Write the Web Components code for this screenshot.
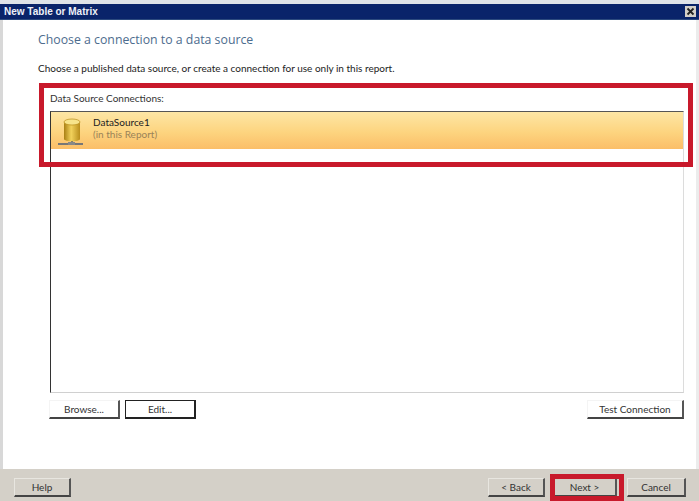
<!DOCTYPE html>
<html><head><meta charset="utf-8"><style>
html,body{margin:0;padding:0;height:100%;background:#fff;overflow:hidden}
body{font:10px/13px Lato,"Open Sans",sans-serif;color:#2b2b2b}
</style></head><body>
<template id="btn"><style>
:host{display:inline-flex;align-items:center;justify-content:center;box-sizing:border-box;height:19px;width:var(--w,71px);border-right:2px solid #555;border-bottom:2px solid #444;border-top:1px solid var(--tl,#f4f4f4);border-left:1px solid var(--tl,#f4f4f4);color:#333;font-size:10px;background:var(--bg,transparent);white-space:nowrap}
:host([strong]){border:1px solid #222;border-right-width:2px;border-bottom-width:2px}
</style><slot></slot></template>

<template id="dlg"><style>
:host{display:grid;grid-template-rows:4px 16px 1fr 32px;height:501px;width:699px;position:relative;box-sizing:border-box}
.strip{background:#dfe3e8}
.bar{background:#0a246a;border-bottom:1px solid #2c4a7e;display:flex;align-items:center;justify-content:space-between;padding:0 3px 0 4px;color:#eef1f8;font:700 10px/15px "Liberation Sans",sans-serif}
.x{width:11px;height:11px;background:#d4d0c8;display:flex;align-items:center;justify-content:center}
.main{border-left:3px solid #d8d8d8;border-right:3px solid #ececec;display:flex;flex-direction:column;min-height:0;padding:0 12px 0 35px}
.foot{background:#d4d0c8;border-left:3px solid #d4d0c8;display:flex;align-items:flex-start;padding:9px 13px 0 11px}
</style><div class="strip"></div>
<div class="bar"><span>New Table or Matrix</span><span class="x"><svg width="9" height="9" viewBox="0 0 9 9"><path d="M1.5 1.5 7.5 7.5M7.5 1.5 1.5 7.5" stroke="#222" stroke-width="1.8"/></svg></span></div>
<div class="main"><slot></slot></div>
<div class="foot"><slot name="footer"></slot></div>
</template>

<template id="conn"><style>
:host{display:flex;flex-direction:column;flex:1;min-height:0}
h1{margin:11px 0 0;font:400 12.3px/17px "Open Sans",sans-serif;color:#4d6c8e;white-space:nowrap}
p{margin:14px 0 0;font-size:10px;line-height:13px;color:#222;white-space:nowrap}
.lbl{margin:17px 0 0 12px;line-height:13px;color:#333}
.list{margin:6px 0 0 12px;height:282px;box-sizing:border-box;border-top:1px solid #555;border-left:1px solid #333;border-right:1px solid #dcdcdc;border-bottom:1px solid #d0d0d0;flex:none}
.row{height:37px;background:linear-gradient(#fde6a5,#fdd47f 55%,#fbbe68);display:flex;align-items:center;gap:9px;padding-left:7px;box-sizing:border-box}
.t{line-height:12px;margin-top:-6px}
.t b{display:block;font-weight:400;color:#222}
.t i{display:block;font-style:normal;color:#9a8358}
.btns{display:flex;gap:5px;margin:7px 0 0 11px}
.sp{flex:1}
</style>
<h1>Choose a connection to a data source</h1>
<p>Choose a published data source, or create a connection for use only in this report.</p>
<div class="lbl">Data Source Connections:</div>
<div class="list"><div class="row">
<svg width="26" height="30" viewBox="0 0 26 30"><defs><linearGradient id="c" x1="0" x2="1" y1="0" y2="0"><stop offset="0" stop-color="#a97f14"/><stop offset=".45" stop-color="#f2d25c"/><stop offset="1" stop-color="#b98e1c"/></linearGradient></defs>
<path d="M14 22v5" stroke="#666" stroke-width="2"/><path d="M0 28h25" stroke="#777" stroke-width="2"/><rect x="10" y="26" width="7" height="3" fill="#888"/>
<path d="M6 6v17c0 3 16 3 16 0V6z" fill="url(#c)"/><ellipse cx="14" cy="6" rx="8" ry="3" fill="#f7e48b" stroke="#b98e1c" stroke-width=".7"/></svg>
<div class="t"><b>DataSource1</b><i>(in this Report)</i></div></div></div>
<div class="btns"><x-btn>Browse...</x-btn><x-btn strong>Edit...</x-btn><span class="sp"></span><x-btn style="--w:97px">Test Connection</x-btn></div>
</template>

<template id="mark"><style>
:host{position:absolute;box-sizing:border-box;border:5px solid #c8192b;pointer-events:none}
</style></template>

<script>
function def(name,id){customElements.define(name,class extends HTMLElement{constructor(){super();this.attachShadow({mode:'open'}).appendChild(document.getElementById(id).content.cloneNode(true));}});}
def('x-btn','btn');def('x-dialog','dlg');def('x-conn','conn');def('x-mark','mark');
</script>
<x-dialog>
<x-conn></x-conn>
<div slot="footer" style="display:flex;gap:0;width:100%;--bg:#d4d0c8;--tl:#e8e6e0">
<x-btn style="--w:57px">Help</x-btn><span style="flex:1"></span>
<x-btn style="--w:57px;margin-right:8px">&lt; Back</x-btn><x-btn style="--w:64px;margin-right:10px">Next &gt;</x-btn><x-btn style="--w:59px">Cancel</x-btn></div>
<x-mark style="left:39px;top:83px;width:654px;height:84px"></x-mark>
<x-mark style="left:550px;top:474px;width:74px;height:27px"></x-mark>
</x-dialog>
</body></html>
